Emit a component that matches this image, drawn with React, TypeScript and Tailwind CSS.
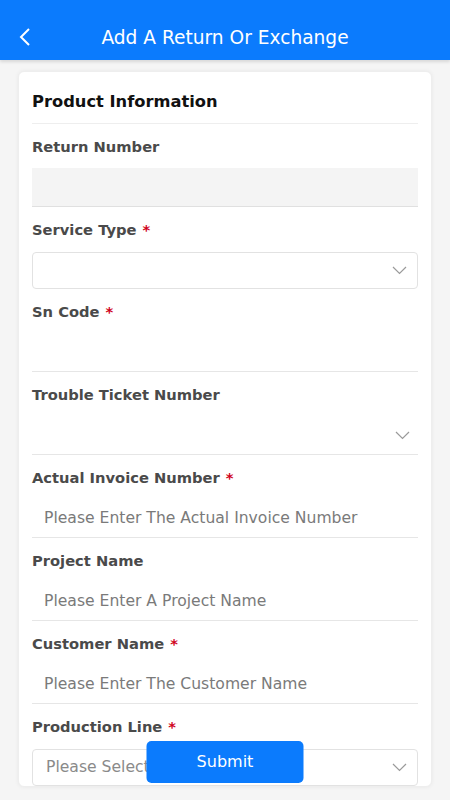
const font = { fontFamily: '"DejaVu Sans", "Noto Sans", sans-serif' };

function Chevron() {
  return (
    <svg width="15" height="9" viewBox="0 0 15 9" fill="none" className="shrink-0">
      <path d="M1 1l6.5 6.5L14 1" stroke="#9a9a9a" strokeWidth="1.2" />
    </svg>
  );
}

function Label({ text, required }: { text: string; required?: boolean }) {
  return (
    <div className="h-[18px] leading-[18px] text-[14.7px] font-bold text-[#4a4a4a]">
      {text}
      {required && <span className="ml-[6px] text-[#d0021b]">*</span>}
    </div>
  );
}

type Field = {
  label: string;
  required?: boolean;
  kind: 'filled' | 'box' | 'line' | 'lineSelect';
  placeholder?: string;
};

const fields: Field[] = [
  { label: 'Return Number', kind: 'filled' },
  { label: 'Service Type', required: true, kind: 'box' },
  { label: 'Sn Code', required: true, kind: 'line' },
  { label: 'Trouble Ticket Number', kind: 'lineSelect' },
  { label: 'Actual Invoice Number', required: true, kind: 'line', placeholder: 'Please Enter The Actual Invoice Number' },
  { label: 'Project Name', kind: 'line', placeholder: 'Please Enter A Project Name' },
  { label: 'Customer Name', required: true, kind: 'line', placeholder: 'Please Enter The Customer Name' },
  { label: 'Production Line', required: true, kind: 'box', placeholder: 'Please Select' },
];

function Input({ field }: { field: Field }) {
  if (field.kind === 'filled') {
    return <div className="mt-[12px] h-[39px] bg-[#f4f4f4] border-b border-[#e0e0e0]" />;
  }
  if (field.kind === 'box') {
    return (
      <div className="mt-[13px] h-[37px] rounded-[4px] border border-[#e2e2e2] flex items-center justify-between pl-[13px] pr-[10px]">
        <span className="text-[15.6px] text-[#8a8a8a]">{field.placeholder}</span>
        <Chevron />
      </div>
    );
  }
  return (
    <div className="mt-[12px] h-[39px] border-b border-[#e6e6e6] flex items-center justify-between pl-[12px] pr-[8px] pt-[1px]">
      <span className="text-[15.6px] text-[#7a7a7a]">{field.placeholder}</span>
      {field.kind === 'lineSelect' && <Chevron />}
    </div>
  );
}

export default function App() {
  return (
    <div className="min-h-[800px] bg-[#f5f5f5]" style={font}>
      <header className="h-[60px] bg-[#0b7bfd] flex items-center relative shadow-[0_2px_3px_rgba(0,0,0,0.12)]">
        <svg width="12" height="18" viewBox="0 0 12 18" fill="none" className="absolute left-[19px] top-[28px]">
          <path d="M10 1L2 9l8 8" stroke="#fff" strokeWidth="2" />
        </svg>
        <h1 className="w-full text-center text-[18.6px] text-white pt-[15px]">Add A Return Or Exchange</h1>
      </header>

      <main className="pt-[11px] px-[18px] pb-[80px]">
        <section className="bg-white rounded-[6px] shadow-[0_0_4px_rgba(0,0,0,0.06)] border border-[#eeeeee] px-[13px]">
          <h2 className="h-[52px] pt-[19px] text-[16.3px] font-bold text-[#111] border-b border-[#eeeeee] leading-[22px]">
            Product Information
          </h2>
          {fields.map((f) => (
            <div key={f.label} className="pt-[14px]">
              <Label text={f.label} required={f.required} />
              <Input field={f} />
            </div>
          ))}
        </section>
      </main>

      <button className="fixed bottom-[17px] left-1/2 -translate-x-1/2 w-[157px] h-[42px] rounded-[5px] bg-[#0b7bfd] text-white text-[16px]">
        Submit
      </button>
    </div>
  );
}
